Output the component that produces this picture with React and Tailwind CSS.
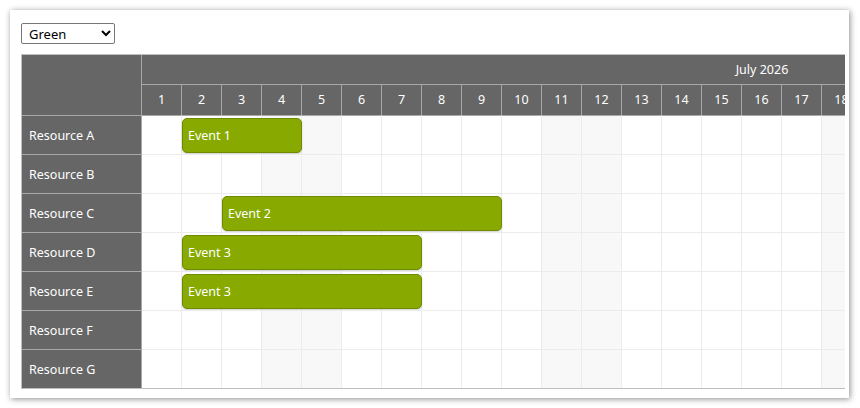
import { useState } from "react";

const resources = ["Resource A", "Resource B", "Resource C", "Resource D", "Resource E", "Resource F", "Resource G"];
const days = Array.from({ length: 31 }, (_, i) => i + 1);
// July 2026: 4th is a Saturday
const isWeekend = (d) => d % 7 === 4 || d % 7 === 5;

const events = {
  0: [{ text: "Event 1", start: 2, len: 3 }],
  2: [{ text: "Event 2", start: 3, len: 7 }],
  3: [{ text: "Event 3", start: 2, len: 6 }],
  4: [{ text: "Event 3", start: 2, len: 6 }],
};

const App = () => {
  const [theme, setTheme] = useState("Green");

  return (
    <div className="min-h-screen bg-white p-[10px] font-['Noto_Sans',sans-serif] text-[12.5px]">
      <div className="w-[839px] h-[388px] bg-white shadow-[1px_1px_6px_rgba(0,0,0,0.45)] px-[11px] pt-[13px]">
        {/* Theme picker */}
        <select
          value={theme}
          onChange={(e) => setTheme(e.target.value)}
          className="block w-[94px] h-[21px] border border-[#767676] rounded-[2px] pl-[3px] text-[13px] text-black bg-white"
        >
          <option>Green</option>
          <option>Blue</option>
          <option>Red</option>
        </select>

        {/* Scheduler */}
        <div className="mt-[10px] w-[824px] overflow-hidden border-t border-l border-b border-[#c0c0c0]">
          {/* Header */}
          <div className="flex">
            <div className="w-[120px] h-[60px] shrink-0 bg-[#666666] border-r border-[#a8a8a8]"></div>
            <div className="flex flex-col shrink-0">
              <div className="w-[1240px] h-[29px] bg-[#666666] text-white flex items-center justify-center pt-[2px]">
                July 2026
              </div>
              <div className="flex">
                {days.map((d) => (
                  <div
                    key={d}
                    className="w-[40px] h-[31px] shrink-0 bg-[#666666] text-white border-t border-r border-[#a8a8a8] flex items-center justify-center pt-[1px]"
                  >
                    {d}
                  </div>
                ))}
              </div>
            </div>
          </div>

          {/* Rows */}
          {resources.map((r, i) => (
            <div key={r} className="flex">
              <div className="w-[120px] h-[39px] shrink-0 bg-[#666666] text-white border-r border-t border-[#a8a8a8] flex items-center pl-[7px] pt-[2px]">
                {r}
              </div>
              <div className="relative flex shrink-0">
                {days.map((d) => (
                  <div
                    key={d}
                    className={`w-[40px] h-[39px] shrink-0 border-r border-t ${i === 0 ? "border-t-[#a8a8a8]" : "border-t-[#ececec]"} border-r-[#ececec] ${isWeekend(d) ? "bg-[#f8f8f8]" : "bg-white"}`}
                  ></div>
                ))}
                {(events[i] || []).map((ev) => (
                  <div
                    key={ev.text + i}
                    className="absolute top-[3px] h-[35px] rounded-[5px] bg-[#88aa00] border border-[#6f8b00] text-white flex items-center pl-[5px] pt-[1px] shadow-[0_1px_2px_rgba(0,0,0,0.2)]"
                    style={{ left: (ev.start - 1) * 40, width: ev.len * 40 }}
                  >
                    {ev.text}
                  </div>
                ))}
              </div>
            </div>
          ))}
        </div>
      </div>
    </div>
  );
};

export default App;
